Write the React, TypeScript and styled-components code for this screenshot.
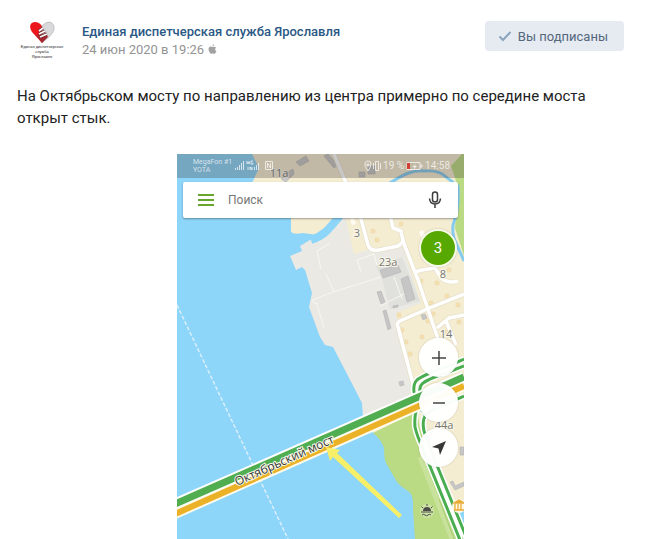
import React from "react";
import styled, { createGlobalStyle } from "styled-components";

const GlobalStyle = createGlobalStyle`
  * { box-sizing: border-box; }
  body { margin: 0; background: #fff; overflow: hidden; font-family: Roboto, "Noto Sans", sans-serif; }
  button, input { font: inherit; }
`;

const Post = styled.article`
  padding: 20px 21px 0 17px;
  overflow: hidden;
`;
const Header = styled.header`
  display: flex;
  align-items: flex-start;
`;
const Avatar = styled.a`
  flex: none;
  width: 50px;
  height: 46px;
  margin-right: 15px;
`;
const Heading = styled.div`
  flex: 1;
  min-width: 0;
  padding-top: 2px;
`;
const Author = styled.a`
  display: block;
  color: #2a5885;
  font-size: 13px;
  font-weight: 500;
  line-height: 19px;
  text-decoration: none;
`;
const Meta = styled.div`
  display: flex;
  align-items: center;
  gap: 4px;
  color: #939393;
  font-size: 13px;
  line-height: 17px;
`;
const Subscribe = styled.button`
  display: flex;
  align-items: center;
  gap: 6px;
  height: 30px;
  margin-top: 1px;
  padding: 0 16px 0 13px;
  border: 0;
  border-radius: 4px;
  background: #e5ebf1;
  color: #55677d;
  font-size: 13px;
  white-space: nowrap;
`;
const Body = styled.p`
  margin: 19px 0 0;
  color: #222;
  font-size: 15px;
  line-height: 22px;
`;
const MapFigure = styled.figure`
  position: relative;
  max-width: 287px;
  margin: 25px auto 0;
  overflow: hidden;
`;
const MapSvg = styled.svg`
  display: block;
  width: 100%;
`;
const StatusBar = styled.div`
  position: absolute;
  inset: 0 0 auto;
  display: flex;
  align-items: center;
  height: 24px;
  padding: 0 14px 0 16px;
  background: rgba(60, 50, 50, 0.28);
  color: rgba(255, 255, 255, 0.7);
`;
const Carrier = styled.div`
  margin-right: 3px;
  font-size: 7px;
  line-height: 8px;
`;
const StatusText = styled.span`
  margin-left: 2px;
  font-size: 10px;
  line-height: 12px;
  white-space: nowrap;
`;
const StatusIcons = styled.svg<{ $push?: boolean }>`
  flex: none;
  margin-left: ${(p) => (p.$push ? "auto" : "2px")};
`;
const SearchBar = styled.div`
  position: absolute;
  inset: 28px 6px auto;
  display: flex;
  align-items: center;
  height: 36px;
  padding: 0 16px 0 14px;
  border-radius: 2px;
  background: #fff;
  box-shadow: 0 1px 2px rgba(0, 0, 0, 0.35);
`;
const PlainButton = styled.button`
  display: flex;
  padding: 0;
  border: 0;
  background: none;
`;
const SearchInput = styled.input`
  flex: 1;
  min-width: 0;
  margin-left: 13px;
  padding: 0;
  border: 0;
  outline: 0;
  background: none;
  font-size: 12px;
  &::placeholder { color: #777; opacity: 1; }
`;
const Controls = styled.div`
  position: absolute;
  top: 184px;
  right: 6px;
  display: flex;
  flex-direction: column;
  gap: 6px;
`;
const RoundButton = styled.button`
  display: flex;
  align-items: center;
  justify-content: center;
  width: 39px;
  height: 39px;
  padding: 0;
  border: 0;
  border-radius: 50%;
  background: rgba(255, 255, 255, 0.97);
  box-shadow: 0 0 2px rgba(0, 0, 0, 0.2);
`;
const TrafficButton = styled(RoundButton)`
  position: absolute;
  top: 75px;
  right: 7px;
  width: 38px;
  height: 38px;
  border: 2px solid #f7fae9;
  background: #57a800;
  color: #fff;
  font-size: 15px;
`;

const roads = [
  "M334 154 L346 183 L361 219 L368 245 Q371 252 379 250 L398 246 Q403 243 403 239",
  "M390 215 L393 228 L401 231 L403 241 L418 280 L438 339",
  "M415 272 L422 270 L435 268 L441 278 Q449 284 458 281",
  "M464 294 L427 309 L400 321 Q396 323 398 327 L413 384",
  "M437 328 L449 318 L464 315",
  "M446 321 L456 345",
];
const ramps = [
  "M464 359 L446 367 C432 372 423 375 417 380 Q413 384 414 392 L418 406 Q414 414 415 427 Q417 436 423 449 L460 540",
  "M464 366 L446 373 C434 377 426 380 422 384 Q419 387 420 394",
  "M464 396 L444 405 Q430 410 425 416 Q422 421 424 431 L434 458 L467 539",
  "M418 408 Q424 411 426 416",
];
const houses = [
  [372, 215], [373, 230], [377, 239], [401, 223], [421, 280], [437, 282], [447, 295],
  [431, 302], [458, 304], [399, 314], [402, 329], [406, 341], [422, 336], [410, 353],
  [433, 313], [447, 331], [459, 321], [449, 269], [428, 320], [450, 239],
];
const numbers: [number, number, string][] = [
  [357, 237, "3"], [388, 266, "23a"], [443, 278, "8"], [446, 338, "14"], [444, 429, "44a"], [279, 177, "11a"],
];

function HeartLogo() {
  return (
    <svg width="50" height="46" viewBox="17 20 50 46" role="img" aria-label="Единая диспетчерская служба">
      <path d="M42 43 L32 32 C28 26 31 22 35 22 Q39 22 42 26 L45 33Z" fill="#ed171e" />
      <path d="M42 26 Q45 22 50 22 Q55 24 54 30 Q53 33 49 37 L42 43Z" fill="#d9d9dc" stroke="#aaa" strokeWidth=".6" />
      <path d="M36 35 L46 34 L48 37 L42 43Z" fill="#a52730" />
      <path d="M39 31 L43 28 M39 34 L45 31 M40 37 L47 34" stroke="#712a2d" strokeWidth="3" />
      <path d="M39 31 L43 28 M39 34 L45 31 M40 37 L47 34" stroke="#fff" strokeWidth="1.6" />
      <g fill="#252525" fontSize="4" textAnchor="middle" fontFamily="Liberation Sans, sans-serif">
        <text x="42" y="48">Единая диспетчерская</text>
        <text x="42" y="53">служба</text>
        <text x="42" y="58">Ярославля</text>
      </g>
    </svg>
  );
}

function CityMap() {
  return (
    <MapSvg viewBox="177 154 287 385" role="img" aria-label="Карта: Октябрьский мост" fill="none">
      <path fill="#8dd5f9" d="M177 154h287v385H177z" />
      <path fill="#f4edd2" d="M252 154 L259 168 L251 185 L291 215 L291 231 Q292 235 303 233 L318 235 L370 430 L464 510 V154Z" />
      <path fill="#eae9e3" d="M338 218 L346 218 L354 254 L368 250 L402 244 L421 303 L396 313 L404 345 L417 394 L363 418 L362 403 L333 347 L325 345 L320 337 L309 307 L312 293 L305 270 L302 267 L296 270 L290 256 L302 251 L300 246 L315 237Z" />
      <path fill="#e0e0dd" d="M376 266 L402 257 L420 301 L390 309 L382 279Z" />
      <path fill="#badb84" d="M464 154 H462 L451 166 L458 187 L455 228 L464 256Z M373 433 L417 411 L420 429 L464 540 H415 L413 510 Q414 494 408 491 Q400 486 397 482 L386 463 Q384 459 384 448 Q381 439 373 433Z" />
      <path d="M311 240 C327 235 332 224 340 216" stroke="#8dd5f9" strokeWidth="8" />
      <path d="M388 184 C400 177 411 169 425 171 Q440 170 446 177 L458 186 C459 200 457 215 453 225 Q452 236 456 243 L464 261" stroke="#84cbed" strokeWidth="3" />
      <g stroke="#f8f7f2" strokeWidth="1">
        <path d="M318 304 Q308 302 315 299 L333 292 L381 277 M326 274 L334 292 M317 304 L324 328 M317 251 L321 269 M330 243 L317 251 M380 306 L412 290 M394 277 L402 299 M361 272 L357 260 L374 254 L377 265" />
      </g>
      <g fill="#c6c6c6" stroke="#b4b4b4" strokeWidth=".6">
        <path d="M380 270 L398 265 L401 272 L383 278Z" />
        <path d="M401 279 L408 276 L415 299 L407 302Z" />
        <path d="M377 292 L381 291 L385 302 L381 304Z" />
        <path d="M383 311 L386 310 L391 328 L388 330Z" />
        <path d="M393 306 L398 305 L398 307 L393 308Z M421 315 L425 314 L427 318 L423 320Z M399 382 L403 381 L404 385 L400 386Z" />
        <path d="M296 162 L306 156 L309 161 L300 166Z M324 156 L328 154 L338 165 L334 168Z M281 179 L288 172 L293 169 L294 174 L286 182Z M359 172h6v5h-6z M368 166h7v8h-7z" />
        <path d="M460 447h4v8h-4z M450 482 L453 481 L455 486 L464 482 V486 L455 490Z" />
      </g>
      <g fill="#f6dfae" stroke="#ead4aa" strokeWidth=".5">
        {houses.map(([x, y]) => <rect key={`${x}-${y}`} x={x - 2} y={y - 1} width="4" height="4" rx="1" />)}
      </g>
      <path fill="#fffdf2" d="M350 219 l4-1 2 6-4 1z M419 232 l4-2 3 8-4 1z" />
      <g stroke="#e7e0ca" strokeWidth="5">{roads.map((d) => <path key={d} d={d} />)}</g>
      <g stroke="#fff" strokeWidth="3.5" strokeLinejoin="round">{roads.map((d) => <path key={d} d={d} />)}</g>
      <path d="M420 457 L452 539" stroke="#c9e29b" strokeWidth="5" />
      <path d="M439 499 L454 539" stroke="#a8cd76" strokeWidth="1" />
      <path d="M177 305 L288 539" stroke="#d9effa" strokeWidth="1.5" strokeDasharray="4 2" />
      <g stroke="#fff" strokeWidth="6">{ramps.map((d) => <path key={d} d={d} />)}</g>
      <path d="M428 447 L464 536" stroke="#fff" strokeWidth="6" />
      <g stroke="#4aae50" strokeWidth="3">{ramps.map((d) => <path key={d} d={d} />)}</g>
      <path d="M175 504 L464 377" stroke="#fff" strokeWidth="11" />
      <path d="M175 514 L464 386" stroke="#fffbed" strokeWidth="10" />
      <path d="M175 504 L464 377" stroke="#50ae51" strokeWidth="7" />
      <path d="M175 514 L464 386" stroke="#ebb127" strokeWidth="6" />
      <g fill="#777" stroke="#faf7e9" strokeWidth="2" paintOrder="stroke" fontSize="11" fontFamily="Open Sans, sans-serif" textAnchor="middle">
        {numbers.map(([x, y, label]) => <text key={label} x={x} y={y}>{label}</text>)}
      </g>
      <text transform="translate(237 486) rotate(-24)" fill="#353535" stroke="#f8f8e9" strokeWidth="2" paintOrder="stroke" fontSize="12" fontFamily="Open Sans, sans-serif">Октябрьский мост</text>
      <path fill="#f8ef68" d="M326 447 L340 450 L337 453 L402 515 L399 518 L333 457 L330 461Z" />
      <circle cx="427" cy="511" r="7" fill="#d5e8b4" opacity=".7" />
      <path d="M423 511 a4 4 0 0 1 8 0Z" fill="#4b4b48" />
      <path d="M421 512h12 M422 515q1.500-1.500 3 0t3 0 3 0 M427 506v-2 M423 508l-1.500-1.500 M431 508l1.500-1.500" stroke="#4b4b48" strokeWidth="1" />
      <circle cx="459" cy="506" r="7" fill="#fff8e5" />
      <path d="M454 503 L459 500 L464 503Z M455 504v6 M458 504v6 M461 504v6 M454 510h10" fill="#e8ab37" stroke="#e8ab37" strokeWidth="1.3" />
    </MapSvg>
  );
}

export default function App() {
  return (
    <>
      <GlobalStyle />
      <Post>
        <Header>
          <Avatar href="#"><HeartLogo /></Avatar>
          <Heading>
            <Author href="#">Единая диспетчерская служба Ярославля</Author>
            <Meta>
              <time dateTime="2020-06-24T19:26">24 июн 2020 в 19:26</time>
              <svg width="9" height="11" viewBox="0 0 9 11" fill="#a2a2a2" aria-hidden="true">
                <path d="M4.5 3 Q1.2 1.6.5 4.5 Q.2 7.5 2.5 9.8 Q3.4 10 4.5 9.3 Q6 10.4 6.8 9.5 Q8 8.4 8.5 7.2 Q6 5.7 8 3.5 Q6.7 2.1 4.5 3Z M4.4 2.5 Q4.3.7 6.2 0 Q6.4 1.8 4.4 2.5Z" />
              </svg>
            </Meta>
          </Heading>
          <Subscribe>
            <svg width="14" height="12" viewBox="0 0 14 12" fill="none" stroke="#8ba4bd" strokeWidth="2" aria-hidden="true"><path d="M1.5 6.5 L5 10 L12.5 2" /></svg>
            Вы подписаны
          </Subscribe>
        </Header>
        <Body>На Октябрьском мосту по направлению из центра примерно по середине моста открыт стык.</Body>
        <MapFigure>
          <CityMap />
          <StatusBar>
            <Carrier>MegaFon #1<br />YOTA</Carrier>
            <svg width="39" height="12" viewBox="0 0 39 12" fill="none" stroke="currentColor" aria-hidden="true">
              <path d="M.5 10V8 M2.5 10V7 M4.5 10V5 M6.5 10V3 M8.5 10V1 M19.5 10V7 M21.5 10V5 M23.5 10V3" />
              <path d="M12 4V1 M12 3h3 M14 1v3 M18 1h-2v3h2V3 M13 7v3 M15 10V7l2 3V7 M30.5 1.5h7v8h-7z M32.5 8V3l3 5V3" />
            </svg>
            <StatusIcons $push width="17" height="12" viewBox="0 0 17 12" fill="none" stroke="currentColor" aria-hidden="true">
              <path d="M4 11 Q0 6 1 3 Q2 1 4 1 Q7 1 7 4 Q7 7 4 11Z M3 4h2v2H3z M11.5 1.500h3v9h-3z M9.500 3v6 M16.500 3v6" />
            </StatusIcons>
            <StatusText>19 %</StatusText>
            <StatusIcons width="17" height="8" viewBox="0 0 17 8" fill="none" aria-hidden="true">
              <path d="M1 .5h13v7H1z M14 3h2v2h-2" stroke="currentColor" /><path d="M1 1h3v6H1z" fill="#d43f33" /><path d="M6 5l4-3-1 2h2L8 7V5z" fill="currentColor" />
            </StatusIcons>
            <StatusText>14:58</StatusText>
          </StatusBar>
          <SearchBar>
            <PlainButton aria-label="Меню"><svg width="18" height="14" viewBox="0 0 18 14" stroke="#69a52d" strokeWidth="2"><path d="M1 2h16M1 7h16M1 12h16" /></svg></PlainButton>
            <SearchInput aria-label="Поиск" placeholder="Поиск" />
            <PlainButton aria-label="Голосовой поиск"><svg width="14" height="18" viewBox="0 0 14 18" fill="none" stroke="#3c3c3c" strokeWidth="1.5"><rect x="4.5" y="1" width="5" height="10" rx="2.5" /><path d="M1.5 7.500 Q2 13 7 13 Q12 13 12.500 7.500 M7 13v4" /></svg></PlainButton>
          </SearchBar>
          <TrafficButton aria-label="Пробки: 3 балла">3</TrafficButton>
          <Controls>
            <RoundButton aria-label="Приблизить"><svg width="16" height="16" viewBox="0 0 16 16" stroke="#454545" strokeWidth="1.5"><path d="M1 8h14M8 1v14" /></svg></RoundButton>
            <RoundButton aria-label="Отдалить"><svg width="16" height="16" viewBox="0 0 16 16" stroke="#454545" strokeWidth="1.5"><path d="M2 8h12" /></svg></RoundButton>
            <RoundButton aria-label="Моё местоположение"><svg width="16" height="16" viewBox="0 0 16 16" fill="#383838"><path d="M15 1 L9 15 L7.500 8.500 L1 7Z" /></svg></RoundButton>
          </Controls>
        </MapFigure>
      </Post>
    </>
  );
}
